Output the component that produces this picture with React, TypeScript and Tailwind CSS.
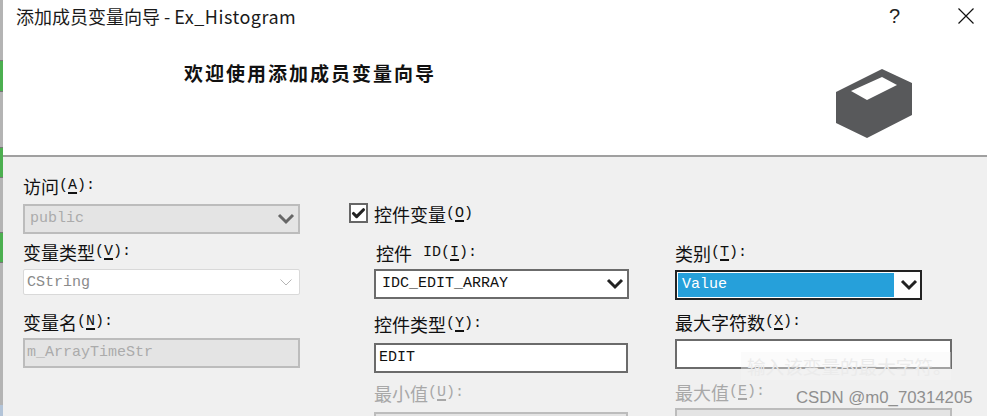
import React from 'react';
import { Check } from 'lucide-react';

const cjk = "font-['Noto_Sans_CJK_SC','Liberation_Mono',monospace]";
const mono = "font-['Liberation_Mono','Noto_Sans_CJK_SC',monospace]";

function Label({ zh, k, disabled, noColon, className = '' }: { zh: string; k: string; disabled?: boolean; noColon?: boolean; className?: string }) {
  return (
    <div className={`h-[24px] flex items-center whitespace-pre text-[18px] leading-[24px] ${cjk} ${disabled ? 'text-[#a8a8a8]' : 'text-[#111]'} ${className}`}>
      <span>{zh}</span>
      <span className={`text-[15px] ${mono}`}>
        (<span className="underline decoration-2 underline-offset-[3px]">{k}</span>)
      </span>
      {!noColon && <span className={`text-[15px] ${mono}`}>:</span>}
    </div>
  );
}

function Chevron({ color = '#222' }: { color?: string }) {
  return (
    <svg width="18" height="12" viewBox="0 0 18 12" fill="none" className="shrink-0">
      <polyline points="2,2 9,9 16,2" stroke={color} strokeWidth="3" />
    </svg>
  );
}

export default function App() {
  return (
    <div className="relative w-[987px] h-[416px] overflow-hidden flex bg-[#f0f0f0] font-['Noto_Sans_CJK_SC',sans-serif]">
      <div className="w-[3px] shrink-0 flex flex-col bg-[#b4b4b4]">
        <div className="h-[60px]" />
        <div className="h-[32px] bg-[#4caf50] border-y border-[#777]" />
        <div className="h-[55px]" />
        <div className="h-[31px] bg-[#4caf50] border-y border-[#777]" />
        <div className="h-[54px]" />
        <div className="h-[31px] bg-[#4caf50] border-y border-[#777]" />
        <div className="h-[142px]" />
        <div className="flex-1 bg-[#b3c4d8]" />
      </div>

      <div className="flex-1 flex flex-col">
        {/* header */}
        <div className="h-[155px] shrink-0 bg-white relative">
          <div className="flex items-center h-[32px] pl-[13px] pr-[13px]">
            <span className="text-[18px] text-[#1a1a1a]">
              添加成员变量向导 - <span className="tracking-[0.5px]">Ex_Histogram</span>
            </span>
            <span className="ml-auto mr-[58px] text-[20px] text-[#222] font-['Liberation_Sans',sans-serif]">?</span>
            <svg width="16" height="16" viewBox="0 0 16 16" fill="none">
              <path d="M0.5 0.5 L15.5 15.5 M15.5 0.5 L0.5 15.5" stroke="#111" strokeWidth="1.2" />
            </svg>
          </div>
          <div className="pl-[181px] pt-[27px] text-[19px] leading-[28px] font-bold tracking-[2px] text-[#111]">欢迎使用添加成员变量向导</div>
          <svg className="absolute left-[833px] top-[69px]" width="76" height="69" viewBox="836 69 76 69">
            <path fill="#58595b" fillRule="evenodd" d="M836 92 L882 69 L912 83 L912 115 L867 138 L836 123 Z M851 91 L867 100 L897 85 L882 77 Z" />
          </svg>
        </div>
        <div className="h-[2px] shrink-0 bg-[#a0a0a0]" />

        {/* form */}
        <div className="flex-1 flex pt-[17px] pl-[20px]">
          <div className="w-[277px] shrink-0">
            <Label zh="访问" k="A" />
            <div className="mt-[6px] h-[30px] border-[2px] border-[#bcbcbc] bg-[#e4e4e4] flex items-center pl-[5px] pr-[3px] justify-between">
              <span className={`text-[15px] text-[#ababab] ${mono}`}>public</span>
              <Chevron color="#666" />
            </div>
            <Label zh="变量类型" k="V" className="mt-[6px]" />
            <div className="mt-[5px] h-[26px] border border-[#d9d9d9] rounded-[2px] bg-white flex items-center pl-[3px] pr-[7px] justify-between">
              <span className={`text-[15px] text-[#8a8a8a] ${mono} pt-[2px]`}>CString</span>
              <svg width="12" height="7" viewBox="0 0 12 7" fill="none">
                <polyline points="0.5,0.5 6,6 11.5,0.5" stroke="#b5b5b5" strokeWidth="1" />
              </svg>
            </div>
            <Label zh="变量名" k="N" className="mt-[15px]" />
            <div className="mt-[4px] h-[30px] border-[2px] border-[#bcbcbc] bg-[#e4e4e4] flex items-center pl-[2px]">
              <span className={`text-[15px] text-[#ababab] ${mono}`}>m_ArrayTimeStr</span>
            </div>
          </div>

          <div className="ml-[49px] w-[19px] shrink-0 pt-[29px]">
            <div className="w-[19px] h-[20px] border-[2px] border-[#666] bg-white flex items-center justify-center">
              <Check size={15} strokeWidth={5} className="text-[#222]" />
            </div>
          </div>

          <div className="ml-[6px] w-[255px] shrink-0 pt-[28px]">
            <Label zh="控件变量" k="O" noColon />
            <div className={`mt-[15px] h-[24px] flex items-center whitespace-pre text-[18px] text-[#111] ml-[2px] ${cjk}`}>
              <span>控件</span>
              <span className={`text-[15px] ml-[2px] ${mono}`}>
                {' ID('}<span className="underline decoration-2 underline-offset-[3px]">I</span>):
              </span>
            </div>
            <div className="mt-[4px] h-[30px] border-[2px] border-[#6b6b6b] bg-white flex items-center pl-[6px] pr-[3px] justify-between">
              <span className={`text-[15px] text-[#111] ${mono}`}>IDC_EDIT_ARRAY</span>
              <Chevron />
            </div>
            <Label zh="控件类型" k="Y" className="mt-[13px]" />
            <div className="mt-[7px] h-[30px] w-[254px] border-[2px] border-[#6b6b6b] bg-white flex items-center pl-[3px]">
              <span className={`text-[15px] text-[#111] ${mono}`}>EDIT</span>
            </div>
            <Label zh="最小值" k="U" disabled className="mt-[8px]" />
            <div className="mt-[7px] h-[30px] w-[254px] border-[2px] border-[#bcbcbc] bg-[#e4e4e4]" />
          </div>

          <div className="ml-[46px] w-[277px] shrink-0 pt-[67px]">
            <Label zh="类别" k="T" />
            <div className="mt-[5px] h-[30px] w-[247px] border-[2px] border-[#222] bg-white p-[1px] flex items-center">
              <div className={`w-[216px] h-full bg-[#26a0da] text-white text-[15px] pl-[4px] flex items-center ${mono}`}>Value</div>
              <div className="ml-[6px]"><Chevron /></div>
            </div>
            <Label zh="最大字符数" k="X" className="mt-[10px]" />
            <div className="mt-[5px] h-[30px] w-[277px] border-[2px] border-[#6b6b6b] bg-white" />
            <Label zh="最大值" k="E" disabled className="mt-[11px]" />
            <div className="mt-[4px] h-[30px] w-[277px] border-[2px] border-[#bcbcbc] bg-[#e4e4e4]" />
          </div>
        </div>
      </div>

      {/* fading tooltip over the edit box */}
      <div className="absolute left-[741px] top-[352px] w-[210px] h-[28px] bg-[#f4f4f4]/40 flex items-center pl-[6px] text-[18.6px] text-[#ebebeb] whitespace-nowrap">
        输入该变量的最大字符。
      </div>
      {/* watermark */}
      <div className="absolute left-[796px] top-[388px] text-[16.8px] leading-[20px] text-[#8f8f8f] font-['Liberation_Sans',sans-serif] whitespace-nowrap">
        CSDN @m0_70314205
      </div>
    </div>
  );
}
